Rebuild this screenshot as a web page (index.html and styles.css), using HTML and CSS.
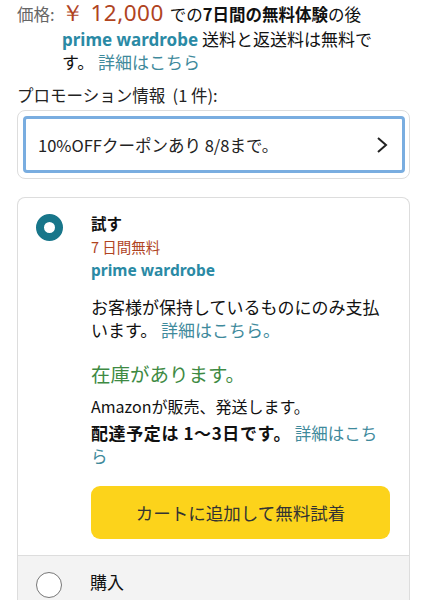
FILE: index.html
```html
<!DOCTYPE html>
<html lang="ja">
<head>
<meta charset="utf-8">
<link rel="stylesheet" href="styles.css">
</head>
<body>
<div class="page">
  <div class="price-line">
    <span class="label">価格:</span>
    <span class="price">￥ 12,000</span>
    <span class="trial">での<b>7日間の無料体験</b>の後</span>
  </div>
  <p class="prime-info"><span class="prime">prime wardrobe</span> 送料と返送料は無料です。 <span class="link">詳細はこちら</span></p>
  <div class="promo-label">プロモーション情報&nbsp;&nbsp;(1 件):</div>
  <div class="promo-box">
    <div class="promo-inner">
      <span>10%OFFクーポンあり 8/8まで。</span>
      <svg class="chev" width="12" height="18" viewBox="0 0 12 18"><path d="M2 2 L10 9 L2 16" fill="none" stroke="#222" stroke-width="2"/></svg>
    </div>
  </div>
  <div class="card">
    <div class="option selected">
      <div class="radio on"></div>
      <div class="opt-body">
        <div class="opt-title">試す</div>
        <div class="free">7 日間無料</div>
        <div class="prime small">prime wardrobe</div>
        <p class="desc">お客様が保持しているものにのみ支払います。 <span class="link">詳細はこちら。</span></p>
        <div class="stock">在庫があります。</div>
        <div class="seller">Amazonが販売、発送します。</div>
        <p class="delivery"><b>配達予定は 1～3日です。</b> <span class="link">詳細はこちら</span></p>
        <button class="cart">カートに追加して無料試着</button>
      </div>
    </div>
    <div class="option buy">
      <div class="radio off"></div>
      <div class="opt-body">
        <div class="opt-title normal">購入</div>
      </div>
    </div>
  </div>
</div>
</body>
</html>
```

FILE: styles.css
```css
* { box-sizing: border-box; }
html, body { margin: 0; padding: 0; background: #fff; }
body {
  font-family: "Noto Sans CJK JP", "Noto Sans", sans-serif;
  color: #111;
  width: 427px;
  height: 600px;
  overflow: hidden;
}
.page { padding: 0 17px; }
.price-line {
  display: flex;
  align-items: baseline;
  gap: 6px;
  height: 25px;
  padding-top: 1px;
  font-size: 16.5px;
  line-height: 24px;
}
.label { color: #666; }
.price { color: #b0441f; font-size: 22.5px; line-height: 24px; font-family: "Noto Sans", sans-serif; letter-spacing: 0.5px; }
.trial b { font-weight: 700; }
.prime-info {
  margin: 3px 0 0 45px;
  width: 330px;
  font-size: 17px;
  line-height: 22px;
}
.prime { color: #2a8aa5; font-weight: 700; font-family: "Noto Sans", sans-serif; }
.link { color: #3f8a9c; }
.promo-label { margin-top: 11px; font-size: 16.5px; line-height: 22px; color: #222; }
.promo-box {
  margin-top: 4px;
  border: 1px solid #ddd;
  border-radius: 8px;
  padding: 5px 4px 5px 5px;
}
.promo-inner {
  display: flex;
  align-items: center;
  justify-content: space-between;
  border: 3px solid #79ade0;
  border-radius: 4px;
  height: 57px;
  padding: 0 14px 0 12px;
  font-size: 16.5px;
  color: #222;
}
.card {
  margin-top: 18px;
  border: 1px solid #ddd;
  border-bottom: none;
  border-radius: 8px 8px 0 0;
  height: 420px;
  overflow: hidden;
  display: flex;
  flex-direction: column;
}
.option { display: flex; }
.selected { padding: 15px 0 16px 18px; }
.radio { flex: none; border-radius: 50%; }
.radio.on {
  width: 27px; height: 27px;
  border: 8px solid #18768a;
  margin-top: 1px;
  background: #fff;
}
.radio.off {
  width: 26px; height: 26px;
  border: 1.5px solid #777;
  background: #fff;
}
.opt-body { margin-left: 28px; }
.opt-title { font-size: 15.5px; font-weight: 700; line-height: 20px; }
.opt-title.normal { font-weight: 400; font-size: 17px; }
.free { color: #b0441f; font-size: 14.5px; line-height: 20px; margin-top: 4px; }
.prime.small { font-size: 15.5px; line-height: 22px; margin-top: 2px; }
.desc { margin: 14px 0 0; width: 300px; font-size: 17px; line-height: 23px; }
.stock { color: #3e8a43; font-size: 19.5px; margin-top: 20px; line-height: 26px; }
.seller { font-size: 16px; margin-top: 8px; line-height: 22px; }
.delivery { margin: 4px 0 0; width: 290px; font-size: 16.5px; line-height: 23px; }
.delivery b { font-size: 17px; letter-spacing: 0.6px; }
.cart {
  display: block;
  margin-top: 18px;
  width: 299px;
  height: 53px;
  border: none;
  border-radius: 9px;
  background: #fcd31b;
  font-family: "Noto Sans CJK JP", sans-serif;
  font-size: 17.5px;
  color: #333;
}
.buy {
  flex: 1;
  background: #f3f3f3;
  border-top: 1px solid #ddd;
  padding: 16px 0 20px 18px;
  align-items: flex-start;
}
```
